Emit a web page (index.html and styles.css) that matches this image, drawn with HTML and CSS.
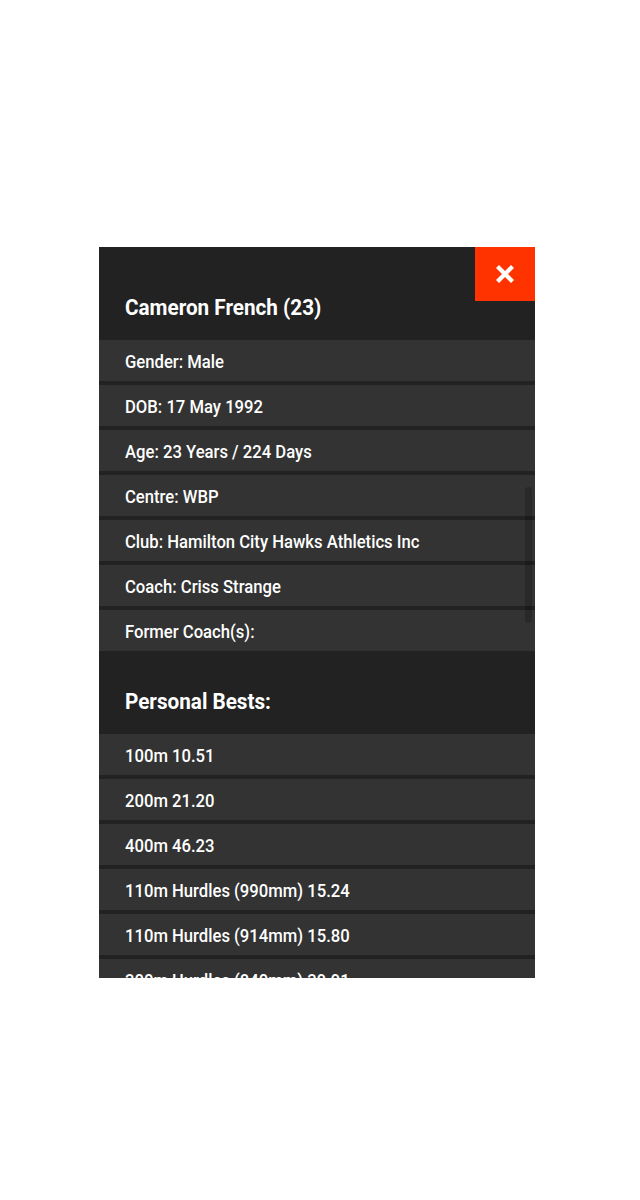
FILE: index.html
```html
<!DOCTYPE html>
<html>
<head>
<meta charset="utf-8">
<link rel="stylesheet" href="styles.css">
</head>
<body>
<div class="page">
  <div class="panel">
    <button class="close" aria-label="Close">
      <svg width="18" height="18" viewBox="0 0 18 18"><path d="M3 3 L15 15 M15 3 L3 15" stroke="#fff" stroke-width="4.2" stroke-linecap="square"/></svg>
    </button>
    <div class="scroll">
      <h2 class="title first"><span class="cond">Cameron French (23)</span></h2>
      <div class="row"><span class="cond">Gender: Male</span></div>
      <div class="row"><span class="cond">DOB: 17 May 1992</span></div>
      <div class="row"><span class="cond">Age: 23 Years / 224 Days</span></div>
      <div class="row"><span class="cond">Centre: WBP</span></div>
      <div class="row"><span class="cond">Club: Hamilton City Hawks Athletics Inc</span></div>
      <div class="row"><span class="cond">Coach: Criss Strange</span></div>
      <div class="row last"><span class="cond">Former Coach(s):</span></div>
      <h2 class="title"><span class="cond">Personal Bests:</span></h2>
      <div class="row"><span class="cond">100m 10.51</span></div>
      <div class="row"><span class="cond">200m 21.20</span></div>
      <div class="row"><span class="cond">400m 46.23</span></div>
      <div class="row"><span class="cond">110m Hurdles (990mm) 15.24</span></div>
      <div class="row"><span class="cond">110m Hurdles (914mm) 15.80</span></div>
      <div class="row"><span class="cond">300m Hurdles (840mm) 39.91</span></div>
      <div class="row"><span class="cond">400m Hurdles (914mm) 52.10</span></div>
    </div>
    <div class="thumb"></div>
  </div>
</div>
</body>
</html>
```
FILE: styles.css
```css
html, body {
  margin: 0;
  padding: 0;
  background: #fff;
}
.page {
  padding-top: 247px;
  padding-left: 99px;
}
.panel {
  position: relative;
  width: 436px;
  height: 731px;
  overflow: hidden;
  background: #222222;
  font-family: Roboto, "Liberation Sans", sans-serif;
  color: #ffffff;
}
.scroll {
  display: flex;
  flex-direction: column;
}
.cond {
  display: inline-block;
  transform: scaleX(0.925);
  transform-origin: left center;
  white-space: nowrap;
}
.title {
  margin: 0;
  padding: 38px 26px 19px;
  font-size: 22px;
  line-height: 26px;
  font-weight: 700;
}
.title .cond {
  transform: scaleX(0.94);
}
.title.first {
  padding-top: 48px;
}
.row {
  height: 41px;
  line-height: 43px;
  margin-bottom: 4px;
  padding-left: 26px;
  background: #333333;
  font-size: 18px;
  font-weight: 500;
  overflow: hidden;
}
.row.last {
  margin-bottom: 0;
}
.close {
  position: absolute;
  top: 0;
  right: 0;
  width: 60px;
  height: 54px;
  border: 0;
  padding: 0;
  background: #ff3300;
  display: flex;
  align-items: center;
  justify-content: center;
  z-index: 2;
}
.thumb {
  position: absolute;
  left: 426px;
  top: 240px;
  width: 7px;
  height: 136px;
  border-radius: 4px;
  background: rgba(0, 0, 0, 0.18);
}
```
